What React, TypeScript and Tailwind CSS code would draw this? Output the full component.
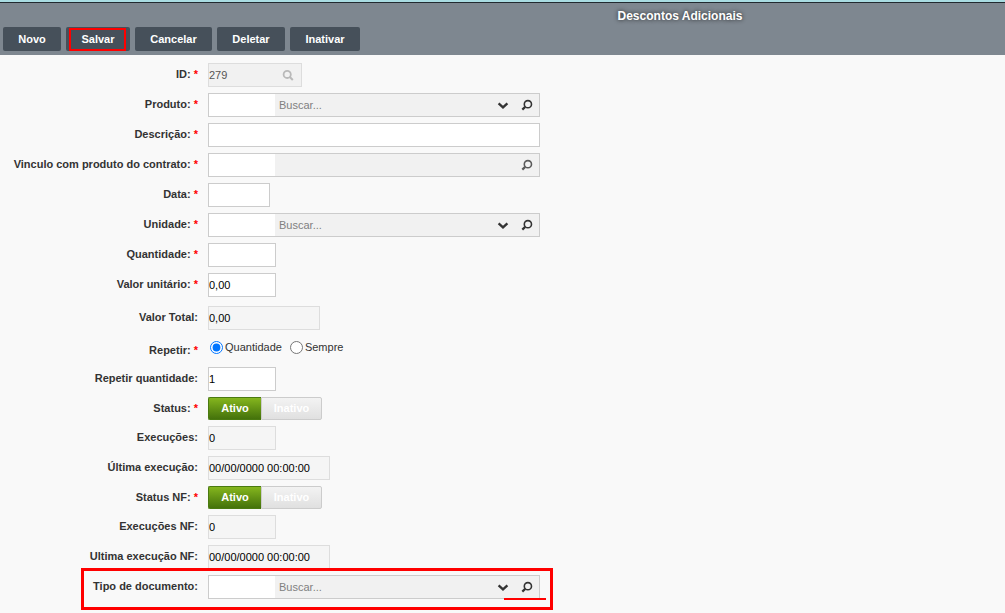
import type { ReactNode } from "react";

function SearchLeftIcon({ color = "#333333" }: { color?: string }) {
  return (
    <svg width="12" height="12" viewBox="0 0 12 12" fill="none" stroke={color} aria-hidden="true">
      <circle cx="6.9" cy="5.2" r="3.6" strokeWidth="1.6" />
      <path d="M4.2 7.9 1.3 10.6" strokeWidth="2.2" />
    </svg>
  );
}

function SearchRightIcon() {
  return (
    <svg width="12" height="12" viewBox="0 0 12 12" fill="none" stroke="#b9b9b9" aria-hidden="true">
      <circle cx="5.2" cy="5.4" r="3.6" strokeWidth="1.8" />
      <path d="M7.8 8 10.8 11" strokeWidth="2" />
    </svg>
  );
}

function ChevronIcon() {
  return (
    <svg width="12" height="8" viewBox="0 0 12 8" fill="none" stroke="#333333" aria-hidden="true">
      <path d="M1.6 2.4 6 6.3 10.4 2.4" strokeWidth="2.4" />
    </svg>
  );
}

type RowProps = { label: string; id: string; required?: boolean; children: ReactNode };

function Row({ label, id, required, children }: RowProps) {
  return (
    <div className="flex items-start gap-[10px]">
      <label htmlFor={id} className="w-[198px] shrink-0 text-right font-bold leading-[22px]">
        {label}:{required && <span className="text-[#ff0000]"> *</span>}
      </label>
      {children}
    </div>
  );
}

type FieldProps = { id: string; width: string; value?: string; readOnly?: boolean };

function Field({ id, width, value = "", readOnly }: FieldProps) {
  const look = readOnly ? "border-[#dddddd] bg-[#f5f5f5]" : "border-[#cccccc] bg-white";
  return (
    <input
      id={id}
      defaultValue={value}
      readOnly={readOnly}
      className={`h-6 border text-black outline-none ${look} ${width}`}
    />
  );
}

function Lookup({ id, name, plain }: { id: string; name: string; plain?: boolean }) {
  return (
    <div className="flex h-6 w-[332px] border border-[#cccccc] bg-[#f1f1f1]">
      <input id={id} className="w-[66px] bg-white outline-none" />
      <input
        aria-label={`Buscar ${name}`}
        placeholder={plain ? "" : "Buscar..."}
        readOnly={plain}
        className="min-w-0 flex-1 bg-transparent px-1 outline-none placeholder:text-[#808080]"
      />
      {!plain && (
        <button type="button" aria-label={`Abrir lista de ${name}`} className="flex w-6 items-center justify-center">
          <ChevronIcon />
        </button>
      )}
      <button type="button" aria-label={`Pesquisar ${name}`} className="flex w-6 items-center justify-center">
        <SearchLeftIcon color={plain ? "#5a5a5a" : "#333333"} />
      </button>
    </div>
  );
}

function Toggle({ id }: { id: string }) {
  return (
    <div className="flex h-[23px] font-bold text-white">
      <button
        id={id}
        type="button"
        aria-pressed="true"
        className="w-[53px] rounded-l-xs border border-r-0 border-[#4a7a10] bg-linear-to-b from-[#85b61e] to-[#44720b]"
      >
        Ativo
      </button>
      <button
        type="button"
        aria-pressed="false"
        className="w-[61px] rounded-r-xs border border-[#cccccc] bg-linear-to-b from-[#f3f3f3] to-[#e0e0e0]"
      >
        Inativo
      </button>
    </div>
  );
}

function ToolButton({ width, children }: { width: string; children: ReactNode }) {
  return (
    <button type="button" className={`h-6 rounded-xs bg-[#46505a] font-bold text-white ${width}`}>
      {children}
    </button>
  );
}

export default function App() {
  return (
    <div className="min-h-screen overflow-hidden bg-[#f9f9f9] font-['Liberation_Sans',Arial,sans-serif] text-[11px] text-[#333333]">
      <header className="border-t-2 border-[#a9dce2] bg-[#7e8790]">
        <div className="border-t border-[#222a30] pb-1">
          <h1 className="pt-1 pl-[355px] text-center text-[12px] leading-[18px] font-bold text-white text-shadow-[0_0_4px_#222222]">
            Descontos Adicionais
          </h1>
          <div className="flex gap-[5px] px-[3px] pt-[2px]">
            <ToolButton width="w-[58px]">Novo</ToolButton>
            <div className="relative flex">
              <ToolButton width="w-[64px]">Salvar</ToolButton>
              <div className="pointer-events-none absolute top-px right-1 bottom-0 left-[3px] border-2 border-[#ff0000]" />
            </div>
            <ToolButton width="w-[77px]">Cancelar</ToolButton>
            <ToolButton width="w-[68px]">Deletar</ToolButton>
            <ToolButton width="w-[70px]">Inativar</ToolButton>
          </div>
        </div>
      </header>

      <form className="flex flex-col gap-[6px] pt-2">
        <Row label="ID" id="id" required>
          <div className="flex h-6 w-[94px] border border-[#dddddd] bg-[#f1f1f1]">
            <input id="id" defaultValue="279" readOnly className="min-w-0 flex-1 text-[#555555] outline-none" />
            <button type="button" aria-label="Pesquisar ID" className="flex w-[26px] items-center justify-center">
              <SearchRightIcon />
            </button>
          </div>
        </Row>
        <Row label="Produto" id="produto" required>
          <Lookup id="produto" name="produto" />
        </Row>
        <Row label="Descrição" id="descricao" required>
          <Field id="descricao" width="w-[332px]" />
        </Row>
        <Row label="Vinculo com produto do contrato" id="vinculo" required>
          <Lookup id="vinculo" name="produto do contrato" plain />
        </Row>
        <Row label="Data" id="data" required>
          <Field id="data" width="w-[62px]" />
        </Row>
        <Row label="Unidade" id="unidade" required>
          <Lookup id="unidade" name="unidade" />
        </Row>
        <Row label="Quantidade" id="quantidade" required>
          <Field id="quantidade" width="w-[68px]" />
        </Row>
        <Row label="Valor unitário" id="unitario" required>
          <Field id="unitario" width="w-[68px]" value="0,00" />
        </Row>
        <div className="pt-[3px]">
          <Row label="Valor Total" id="total">
            <Field id="total" width="w-[112px]" value="0,00" readOnly />
          </Row>
        </div>
        <div className="pt-[3px]">
          <Row label="Repetir" id="repetir-quantidade" required>
            <div className="flex h-[17px] items-center gap-2 pl-[2px] leading-[17px]">
              <label className="flex items-center gap-[2px]">
                <input id="repetir-quantidade" type="radio" name="repetir" defaultChecked className="size-[13px]" />
                Quantidade
              </label>
              <label className="flex items-center gap-[2px]">
                <input type="radio" name="repetir" className="size-[13px]" />
                Sempre
              </label>
            </div>
          </Row>
        </div>
        <Row label="Repetir quantidade" id="repeticoes">
          <Field id="repeticoes" width="w-[68px]" value="1" />
        </Row>
        <Row label="Status" id="status" required>
          <Toggle id="status" />
        </Row>
        <Row label="Execuções" id="execucoes">
          <Field id="execucoes" width="w-[68px]" value="0" readOnly />
        </Row>
        <Row label="Última execução" id="ultima">
          <Field id="ultima" width="w-[122px]" value="00/00/0000 00:00:00" readOnly />
        </Row>
        <Row label="Status NF" id="status-nf" required>
          <Toggle id="status-nf" />
        </Row>
        <Row label="Execuções NF" id="execucoes-nf">
          <Field id="execucoes-nf" width="w-[68px]" value="0" readOnly />
        </Row>
        <Row label="Ultima execução NF" id="ultima-nf">
          <Field id="ultima-nf" width="w-[122px]" value="00/00/0000 00:00:00" readOnly />
        </Row>
        <div className="relative">
          <Row label="Tipo de documento" id="documento">
            <Lookup id="documento" name="tipo de documento" />
          </Row>
          <div className="pointer-events-none absolute -top-[7px] left-[81px] h-[42px] w-[472px] border-3 border-[#ff0000]" />
          <div className="pointer-events-none absolute top-[23px] left-[504px] h-[2px] w-[42px] bg-[#ff0000]" />
        </div>
      </form>
    </div>
  );
}
